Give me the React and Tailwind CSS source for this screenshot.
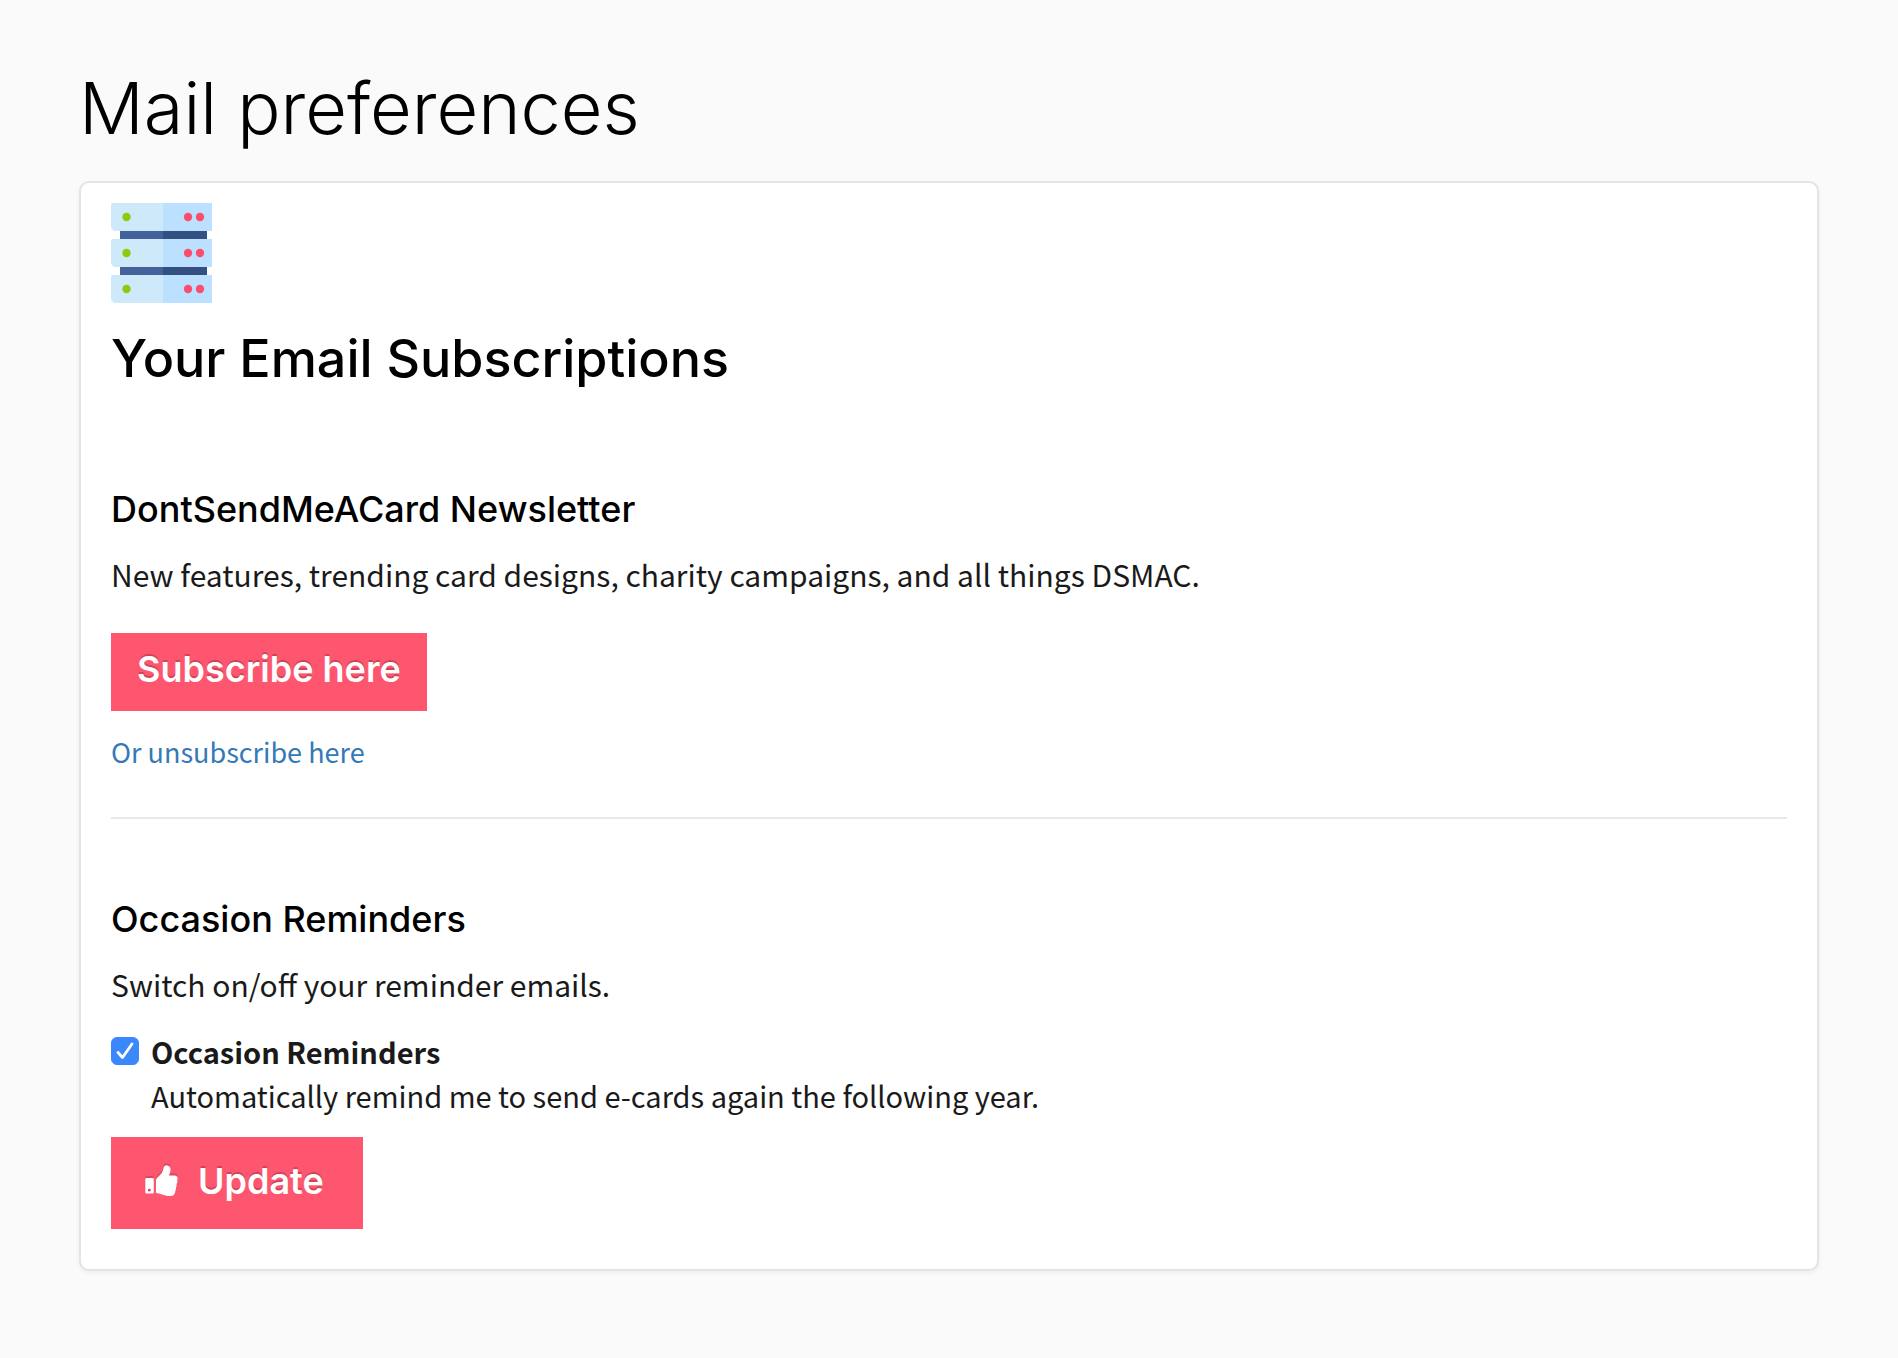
import { useState } from "react";

const SHELVES = [0, 36, 72];

function ServerIcon() {
  return (
    <svg viewBox="0 0 101 100" className="h-[100px] w-[101px]" aria-hidden="true">
      <path d="M9 28h43v8H9zM9 64h43v8H9z" fill="#43619b" />
      <path d="M52 28h44v8H52zM52 64h44v8H52z" fill="#344f81" />
      {SHELVES.map((y) => (
        <g key={y} transform={`translate(0 ${y})`}>
          <path d="M1 0H52V28H3L0 25V1z" fill="#cee9f9" />
          <path d="M52 0h49v28H52z" fill="#bce0ff" />
          <circle cx="15.500" cy="14" r="4.200" fill="#8bcb0b" />
          <circle cx="77" cy="14" r="4.200" fill="#fd4d6c" />
          <circle cx="89" cy="14" r="4.200" fill="#fd4d6c" />
        </g>
      ))}
    </svg>
  );
}

function ThumbIcon() {
  return (
    <svg
      viewBox="0 0 33 32"
      fill="currentColor"
      className="h-8 w-[33px] drop-shadow-[0_-2px_0_rgba(0,0,0,0.15)]"
      aria-hidden="true"
    >
      <path
        fillRule="evenodd"
        d="M1.500 13H7.500Q8.800 13 8.800 14.300V27.200Q8.800 28.500 7.500 28.500H1.500Q0.300 28.500 0.300 27.200V14.300Q0.300 13 1.500 13ZM4.300 23.600a1.500 1.500 0 1 0 0 3a1.500 1.500 0 1 0 0-3Z"
      />
      <path d="M11 15.500Q11 14 12 13L16 9Q17.500 7.500 18 5L18.800 2Q19.500 0.200 21.500 0.200Q25.500 0.500 25.500 4.500Q25.500 7 24 10.500H29.500Q32.800 10.800 32.600 13.500Q32.500 14.500 32.300 15.500Q32.500 17.500 31.600 19Q31.900 21 31 22.500Q31 25 30.200 26.500Q29.600 31 26 31Q21 31 17 29.500Q14 28.300 12.200 28.300Q11 28.200 11 27Z" />
    </svg>
  );
}

function SectionTitle({ children }) {
  return (
    <h3 className="font-['Inter','Liberation_Sans',sans-serif] text-[36px] leading-10 font-medium text-black">
      {children}
    </h3>
  );
}

function ActionButton({ className, children }) {
  return (
    <button
      type="button"
      className={`flex items-center bg-[#fe566f] font-['Inter','Liberation_Sans',sans-serif] text-[36px] leading-10 font-semibold text-white [text-shadow:0_-2px_0_rgba(0,0,0,0.2)] ${className}`}
    >
      {children}
    </button>
  );
}

export default function App() {
  const [reminders, setReminders] = useState(true);

  return (
    <main className="min-h-screen bg-[#fafafa] px-[79px] pt-16 pb-20 font-['Noto_Sans_CJK_SC',sans-serif] text-[#1a1a1a]">
      <h1 className="font-['Inter','Liberation_Sans',sans-serif] text-[72px] leading-[88px] font-light text-black">
        Mail preferences
      </h1>

      <div className="mt-[29px] flex flex-col items-start rounded-[10px] border-2 border-[#e4e4e4] bg-white px-[30px] pt-5 pb-10 shadow-[0_2px_4px_rgba(0,0,0,0.05)]">
        <ServerIcon />
        <h2 className="mt-[26px] font-['Inter','Liberation_Sans',sans-serif] text-[52px] leading-[60px] font-medium text-black">
          Your Email Subscriptions
        </h2>

        <section className="mt-[100px] flex w-full flex-col items-start">
          <SectionTitle>DontSendMeACard Newsletter</SectionTitle>
          <p className="mt-[25px] text-[30px] leading-10">
            New features, trending card designs, charity campaigns, and all things DSMAC.
          </p>
          <ActionButton className="mt-[39px] px-[26px] pt-4 pb-[22px]">Subscribe here</ActionButton>
          <a href="#unsubscribe" className="mt-[23px] text-[27px] leading-9 text-[#337ab7]">
            Or unsubscribe here
          </a>
        </section>

        <hr className="mt-[47px] w-full border-t-2 border-[#e9e9e9]" />

        <section className="mt-20 flex w-full flex-col items-start">
          <SectionTitle>Occasion Reminders</SectionTitle>
          <p className="mt-[25px] text-[30px] leading-10">Switch on/off your reminder emails.</p>

          <div className="mt-[25px] grid grid-cols-[28px_1fr] items-center gap-x-3">
            <span className="grid size-7">
              <input
                id="reminders"
                type="checkbox"
                checked={reminders}
                onChange={(e) => setReminders(e.target.checked)}
                aria-describedby="reminders-note"
                className="peer col-start-1 row-start-1 size-7 appearance-none rounded-md border border-[#b5b5b5] bg-white checked:border-[#3b87fd] checked:bg-[#3b87fd]"
              />
              <svg
                viewBox="0 0 28 28"
                className="pointer-events-none invisible col-start-1 row-start-1 size-7 peer-checked:visible"
                aria-hidden="true"
              >
                <path
                  d="M7 15.500l4.500 5L21 7"
                  fill="none"
                  stroke="#fff"
                  strokeWidth="2.800"
                  strokeLinecap="round"
                  strokeLinejoin="round"
                />
              </svg>
            </span>
            <label htmlFor="reminders" className="text-[29px] leading-[44px] font-bold">
              Occasion Reminders
            </label>
            <p id="reminders-note" className="col-start-2 text-[29px] leading-[44px]">
              Automatically remind me to send e-cards again the following year.
            </p>
          </div>

          <ActionButton className="mt-5 gap-5 pt-6 pr-[39px] pb-7 pl-[34px]">
            <ThumbIcon />
            Update
          </ActionButton>
        </section>
      </div>
    </main>
  );
}
